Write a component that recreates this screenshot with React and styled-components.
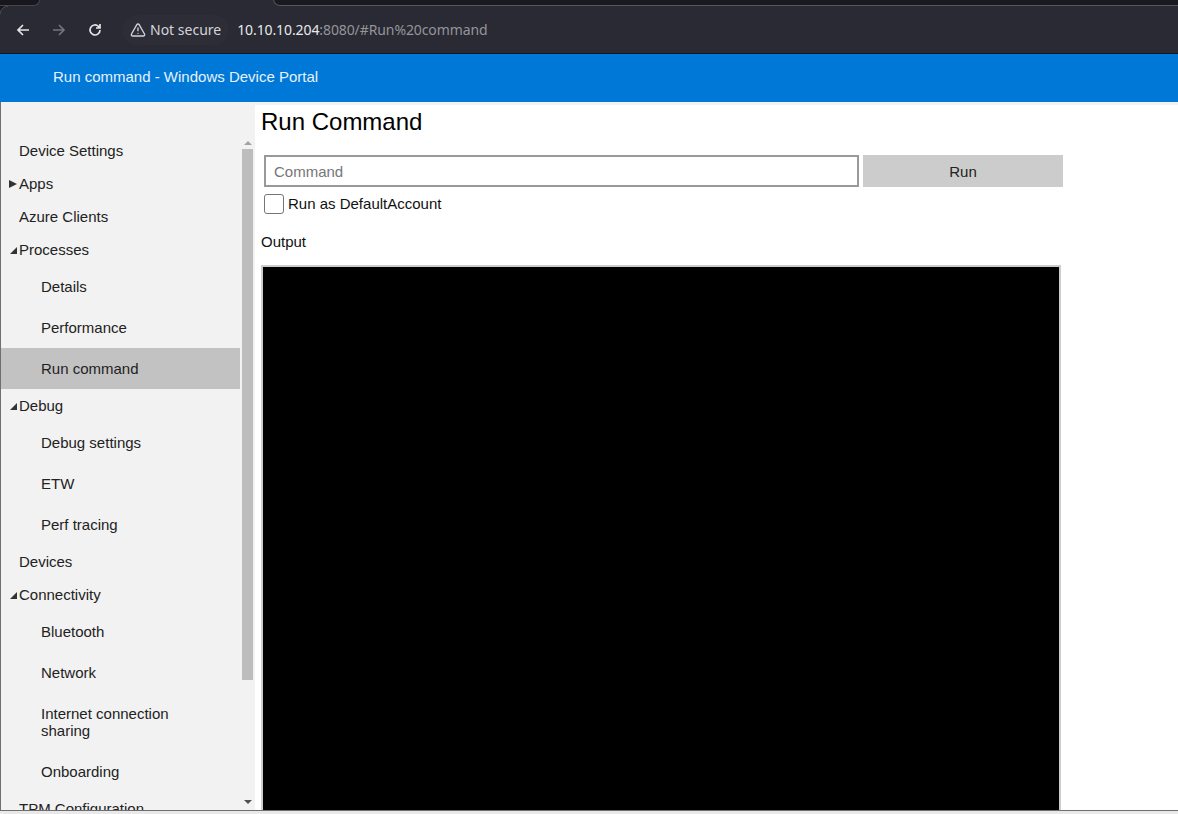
import React from "react"
import styled, { createGlobalStyle } from 'styled-components'
import { TriangleAlert } from 'lucide-react'

const GlobalStyle = createGlobalStyle`
html, body {
    margin: 0;
    padding: 0;
    height: 100%;
    overflow: hidden;
    background: #e9e9e9;
}
`

const navItems = [
    { label: 'Device Settings' },
    { label: 'Apps', arrow: 'closed' },
    { label: 'Azure Clients' },
    { label: 'Processes', arrow: 'open' },
    { label: 'Details', sub: true },
    { label: 'Performance', sub: true },
    { label: 'Run command', sub: true, active: true },
    { label: 'Debug', arrow: 'open' },
    { label: 'Debug settings', sub: true },
    { label: 'ETW', sub: true },
    { label: 'Perf tracing', sub: true },
    { label: 'Devices' },
    { label: 'Connectivity', arrow: 'open' },
    { label: 'Bluetooth', sub: true },
    { label: 'Network', sub: true },
    { label: 'Internet connection sharing', sub: true },
    { label: 'Onboarding', sub: true },
    { label: 'TPM Configuration' },
]

export default function App(){
    return(
        <Window>
            <GlobalStyle/>
            <TabStrip>
                <LeftTab/>
                <ActiveTabEdge/>
            </TabStrip>
            <Toolbar>
                <NavIcon viewBox="0 0 16 16">
                    <path d="M14 8H3M8 3L3 8l5 5"/>
                </NavIcon>
                <NavIcon viewBox="0 0 16 16" $dim>
                    <path d="M2 8h11M8 3l5 5-5 5"/>
                </NavIcon>
                <NavIcon viewBox="0 0 16 16">
                    <path d="M13 8a5 5 0 1 1-1.6-3.7L13 6M13 2v4H9"/>
                </NavIcon>
                <SecurityChip>
                    <TriangleAlert size={16} strokeWidth={2}/>
                    Not secure
                </SecurityChip>
                <Url>10.10.10.204<span>:8080/#Run%20command</span></Url>
            </Toolbar>
            <Page>
                <Banner>Run command - Windows Device Portal</Banner>
                <Body>
                    <Sidebar>
                        <NavList>
                            {navItems.map(item => (
                                <NavRow key={item.label} $sub={item.sub} $active={item.active}>
                                    {item.arrow && (
                                        <Arrow viewBox="0 0 8 8">
                                            {item.arrow === 'open'
                                                ? <polygon points="8,1 8,8 1,8"/>
                                                : <polygon points="0,0 8,4 0,8"/>}
                                        </Arrow>
                                    )}
                                    <span>{item.label}</span>
                                </NavRow>
                            ))}
                        </NavList>
                        <ScrollBar>
                            <ScrollUp/>
                            <Thumb/>
                            <ScrollDown/>
                        </ScrollBar>
                    </Sidebar>
                    <Main>
                        <Title>Run Command</Title>
                        <CommandRow>
                            <CommandInput placeholder="Command"/>
                            <RunButton>Run</RunButton>
                        </CommandRow>
                        <CheckRow>
                            <CheckBox/>
                            <CheckText>Run as DefaultAccount</CheckText>
                        </CheckRow>
                        <OutputLabel>Output</OutputLabel>
                        <OutputBox/>
                    </Main>
                </Body>
            </Page>
        </Window>
    )
}

const Window = styled.div`
height: 814px;
display: flex;
flex-direction: column;
font-family: "Liberation Sans", Arial, sans-serif;
overflow: hidden;
background: #e9e9e9;
`

const TabStrip = styled.div`
height: 6px;
flex-shrink: 0;
background: #292a33;
position: relative;
`

const LeftTab = styled.div`
position: absolute;
left: 0;
top: 0;
width: 40px;
height: 6px;
box-sizing: border-box;
background: #17171d;
border-right: 1px solid #45464c;
border-bottom: 1px solid #45464c;
border-bottom-right-radius: 6px;
`

const ActiveTabEdge = styled.div`
position: absolute;
left: 273px;
right: 0;
bottom: 0;
height: 7px;
background: #191921;
border-bottom: 1px solid #55565c;
border-left: 1px solid #55565c;
border-bottom-left-radius: 7px;
box-sizing: border-box;
`

const Toolbar = styled.div`
position: relative;
height: 48px;
flex-shrink: 0;
box-sizing: border-box;
background: #292a33;
border-bottom: 1px solid #15151b;
display: flex;
align-items: center;
padding-left: 15px;
color: #e4e4e7;
font-family: "Noto Sans", sans-serif;
font-size: 14px;
&::before{
    content: '';
    position: absolute;
    left: 0;
    top: 0;
    width: 8px;
    height: 8px;
    background: radial-gradient(circle at 100% 100%, transparent 7px, #45464c 7.5px, #45464c 8px, #17171d 8.5px);
}
`

const NavIcon = styled.svg`
width: 16px;
height: 16px;
margin-right: 20px;
fill: none;
stroke: ${props => props.$dim ? '#74757b' : '#e4e4e7'};
stroke-width: 1.7;
`

const SecurityChip = styled.div`
display: flex;
align-items: center;
gap: 4px;
height: 30px;
padding: 0 8px;
margin-left: -1px;
border-radius: 15px;
background: #2c2d37;
color: #d4d4d8;
`

const Url = styled.div`
margin-left: 8px;
letter-spacing: -0.1px;
color: #e8e8ea;
span{
    color: #94959a;
}
`

const Page = styled.div`
flex: 1;
min-height: 0;
margin-bottom: 3px;
display: flex;
flex-direction: column;
background: #fff;
border-left: 1px solid #6f6f6f;
border-bottom: 1px solid #6f6f6f;
`

const Banner = styled.header`
height: 48px;
flex-shrink: 0;
box-sizing: border-box;
margin-left: -1px;
padding: 0 0 4px 53px;
display: flex;
align-items: center;
background: #0078d7;
color: #e6f2fb;
font-size: 15px;
`

const Body = styled.div`
flex: 1;
min-height: 0;
display: flex;
`

const Sidebar = styled.aside`
width: 254px;
flex-shrink: 0;
display: flex;
background: #f2f2f2;
overflow: hidden;
`

const NavList = styled.nav`
width: 239px;
flex-shrink: 0;
padding-top: 32px;
`

const NavRow = styled.div`
position: relative;
box-sizing: border-box;
display: flex;
align-items: center;
min-height: ${props => props.$sub ? '41px' : '33px'};
padding: ${props => props.$sub ? '12px 60px 12px 40px' : '0 0 0 18px'};
background: ${props => props.$active ? '#c2c2c2' : 'transparent'};
color: #222;
font-size: 15px;
line-height: 17px;
white-space: ${props => props.$sub ? 'normal' : 'nowrap'};
`

const Arrow = styled.svg`
position: absolute;
left: 8px;
width: 8px;
height: 8px;
fill: #333;
`

const ScrollBar = styled.div`
width: 15px;
display: flex;
flex-direction: column;
align-items: center;
padding-top: 39px;
`

const Thumb = styled.div`
width: 11px;
height: 531px;
margin: 4px 0 auto;
background: #bdbdbd;
`

const ScrollUp = styled.div`
width: 0;
height: 0;
border-left: 4px solid transparent;
border-right: 4px solid transparent;
border-bottom: 4px solid #a3a3a3;
`

const ScrollDown = styled.div`
width: 0;
height: 0;
margin-bottom: 6px;
border-left: 4px solid transparent;
border-right: 4px solid transparent;
border-top: 4px solid #505050;
`

const Main = styled.main`
flex: 1;
min-width: 0;
padding-left: 6px;
border-top: 3px solid #f2f2f2;
overflow: hidden;
color: #111;
font-size: 15px;
`

const Title = styled.h1`
margin: 0;
font-size: 24px;
font-weight: 400;
line-height: 28px;
padding-top: 3px;
color: #000;
`

const CommandRow = styled.div`
display: flex;
gap: 4px;
margin: 19px 0 0 3px;
`

const CommandInput = styled.input`
width: 595px;
height: 32px;
box-sizing: border-box;
border: 2px solid #999;
padding: 0 8px;
outline: none;
background: #fff;
font-family: inherit;
font-size: 15px;
&::placeholder{
    color: #767676;
}
`

const RunButton = styled.button`
width: 200px;
height: 32px;
border: 0;
padding: 0;
background: #ccc;
color: #222;
font-family: inherit;
font-size: 15px;
`

const CheckRow = styled.label`
display: flex;
align-items: center;
gap: 4px;
margin: 7px 0 0 3px;
height: 20px;
`

const CheckText = styled.span`
padding-bottom: 2px;
`

const CheckBox = styled.span`
display: block;
width: 20px;
height: 20px;
box-sizing: border-box;
border: 1px solid #767676;
border-radius: 3px;
background: #fff;
`

const OutputLabel = styled.div`
margin-top: 19px;
line-height: 17px;
`

const OutputBox = styled.div`
width: 800px;
height: 560px;
box-sizing: border-box;
margin-top: 15px;
border: 2px solid #ccc;
background: #000;
`
